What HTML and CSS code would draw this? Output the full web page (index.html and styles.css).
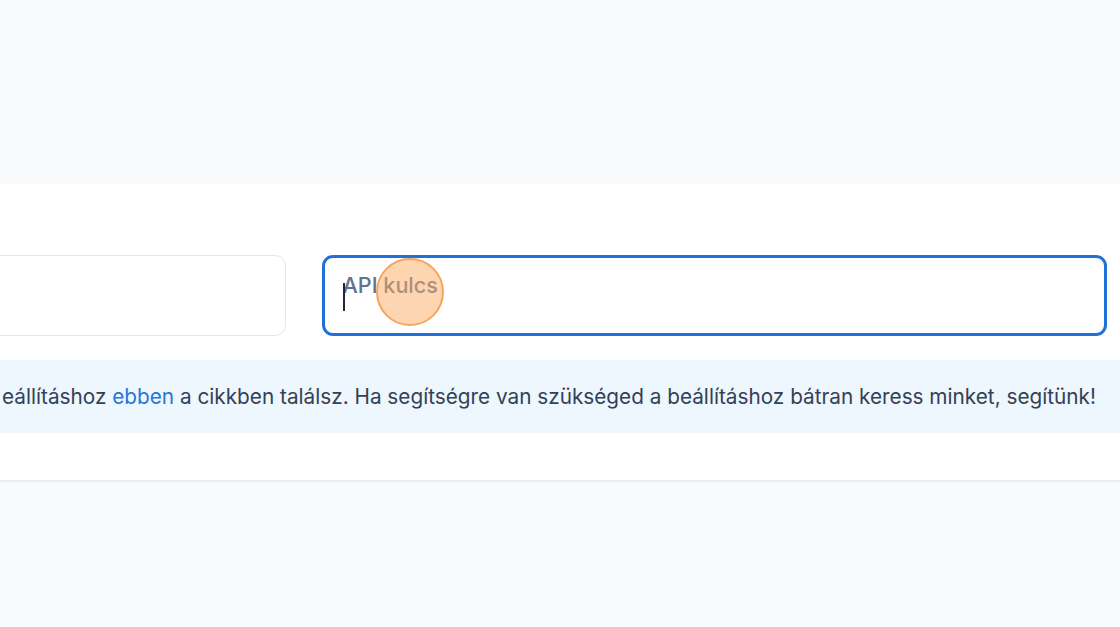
FILE: index.html
```html
<!DOCTYPE html>
<html lang="hu">
<head>
<meta charset="utf-8">
<title>API kulcs</title>
<link rel="stylesheet" href="styles.css">
</head>
<body>
<div class="top"></div>
<section class="card">
  <div class="fields">
    <div class="field"><input class="input" type="text" aria-label="Felhasználónév"></div>
    <div class="field field-active">
      <input class="input" type="text" placeholder="API kulcs">
      <span class="caret"></span>
      <span class="click"></span>
    </div>
  </div>
  <div class="info">
    <p class="info-text">eállításhoz <a href="#" class="link">ebben</a> a cikkben találsz. Ha segítségre van szükséged a beállításhoz bátran keress minket, segítünk!</p>
  </div>
</section>
</body>
</html>
```
FILE: styles.css
```css
html, body {
  margin: 0;
  padding: 0;
}
body {
  background: #f8fafc;
  font-family: Inter, "Noto Sans", sans-serif;
  width: 1120px;
  height: 627px;
  overflow: hidden;
}
.top {
  height: 184px;
}
.card {
  background: #ffffff;
  border-bottom: 2px solid #e9ecf0;
  padding: 71px 0 47px 0;
}
.fields {
  display: grid;
  grid-template-columns: 1fr 785px;
  column-gap: 36px;
  margin-left: -40px;
  padding-right: 13px;
}
.field {
  position: relative;
  height: 81px;
  box-sizing: border-box;
  border: 1.5px solid #e5e7eb;
  border-radius: 11px;
  background: #fff;
}
.field-active {
  border: 3px solid #1f70d8;
}
.input {
  width: 100%;
  height: 100%;
  box-sizing: border-box;
  border: 0;
  outline: none;
  background: transparent;
  font-family: Inter, "Noto Sans", sans-serif;
  font-size: 21.6px;
  font-weight: 500;
  padding: 0 0 0 17.5px;
  padding-bottom: 22px;
  color: #1e293b;
}
.input::placeholder {
  color: #5f7391;
  opacity: 1;
}
.caret {
  position: absolute;
  left: 18px;
  top: 24.5px;
  width: 2px;
  height: 28px;
  background: #1f2937;
}
.click {
  position: absolute;
  left: 50.5px;
  top: -0.5px;
  width: 64px;
  height: 64px;
  border-radius: 50%;
  background: rgba(252, 172, 100, 0.5);
  border: 2.5px solid #f6a55e;
}
.info {
  margin-top: 24px;
  height: 73px;
  background: #eef6fe;
  display: flex;
  align-items: center;
  padding-left: 2px;
  overflow: hidden;
}
.info-text {
  margin: 0;
  white-space: nowrap;
  flex-shrink: 0;
  font-size: 20.75px;
  color: #334155;
  line-height: 26px;
}
.link {
  color: #2577d8;
  text-decoration: none;
}
```
